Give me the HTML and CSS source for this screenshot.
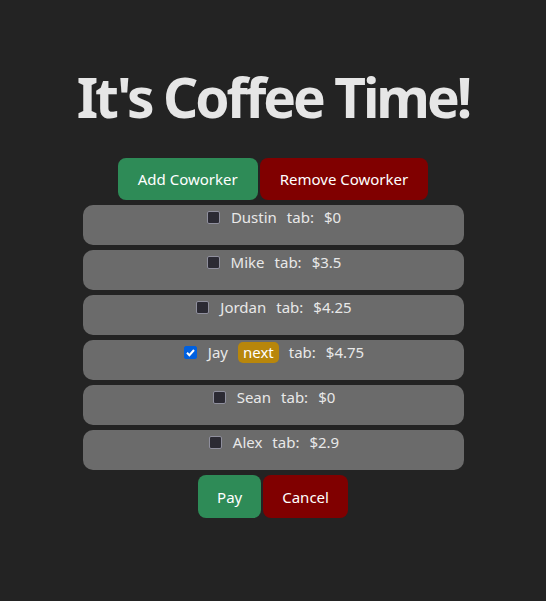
FILE: index.html
```html
<!DOCTYPE html>
<html>
<head>
<meta charset="utf-8">
<link rel="stylesheet" href="styles.css">
</head>
<body>
<main class="app">
  <h1 class="title">It's Coffee Time!</h1>
  <div class="actions">
    <button class="btn btn-green">Add Coworker</button>
    <button class="btn btn-red">Remove Coworker</button>
  </div>
  <ul class="list">
    <li class="row"><span class="check"></span><span>Dustin</span><span>tab:</span><span>$0</span></li>
    <li class="row"><span class="check"></span><span>Mike</span><span>tab:</span><span>$3.5</span></li>
    <li class="row"><span class="check"></span><span>Jordan</span><span>tab:</span><span>$4.25</span></li>
    <li class="row"><span class="check checked"><svg viewBox="0 0 13 13" width="13" height="13"><path d="M3 6.8 L5.4 9.2 L10 4" fill="none" stroke="#fff" stroke-width="2"/></svg></span><span>Jay</span><span class="badge">next</span><span>tab:</span><span>$4.75</span></li>
    <li class="row"><span class="check"></span><span>Sean</span><span>tab:</span><span>$0</span></li>
    <li class="row"><span class="check"></span><span>Alex</span><span>tab:</span><span>$2.9</span></li>
  </ul>
  <div class="actions">
    <button class="btn btn-green btn-tall">Pay</button>
    <button class="btn btn-red btn-tall">Cancel</button>
  </div>
</main>
</body>
</html>
```
FILE: styles.css
```css
html, body {
  margin: 0;
  padding: 0;
  background: #232323;
}
body {
  font-family: "Noto Sans", "Open Sans", sans-serif;
  color: #e6e6e6;
}
.app {
  width: 381px;
  margin: 0 auto;
  display: flex;
  flex-direction: column;
  align-items: stretch;
  padding-top: 57px;
}
.title {
  margin: 0 -60px 21px;
  text-align: center;
  white-space: nowrap;
  font-size: 55px;
  font-weight: 700;
  letter-spacing: -3px;
  line-height: 80px;
  color: #e6e6e6;
}
.actions {
  display: flex;
  justify-content: center;
  gap: 2px;
}
.btn {
  font-family: inherit;
  font-size: 15px;
  color: #fff;
  border: none;
  border-radius: 8px;
  height: 42px;
  padding: 0 20px;
  cursor: pointer;
}
.btn-tall {
  height: 43px;
  padding: 0 19px;
}
.btn-green { background: #2e8b57; }
.btn-red { background: #800000; }
.list {
  list-style: none;
  margin: 5px 0;
  padding: 0;
  display: flex;
  flex-direction: column;
  gap: 5px;
}
.row {
  height: 40px;
  box-sizing: border-box;
  background: #6b6b6b;
  border-radius: 10px;
  display: flex;
  justify-content: center;
  align-items: flex-start;
  gap: 10px;
  padding-top: 1px;
  padding-left: 2px;
  font-size: 15px;
  line-height: 22px;
  color: #e8e8e8;
}
.check {
  width: 13px;
  height: 13px;
  box-sizing: border-box;
  margin-top: 5px;
  margin-right: 1px;
  background: #2b2a33;
  border: 1px solid #8f8f9d;
  border-radius: 2px;
  display: flex;
}
.check.checked {
  background: #0060df;
  border-color: #0060df;
}
.check svg {
  margin: -1px;
}
.badge {
  background: #b8860b;
  color: #fff;
  border-radius: 5px;
  padding: 0 5px;
  height: 21px;
  margin-top: 1px;
  line-height: 21px;
}
```
